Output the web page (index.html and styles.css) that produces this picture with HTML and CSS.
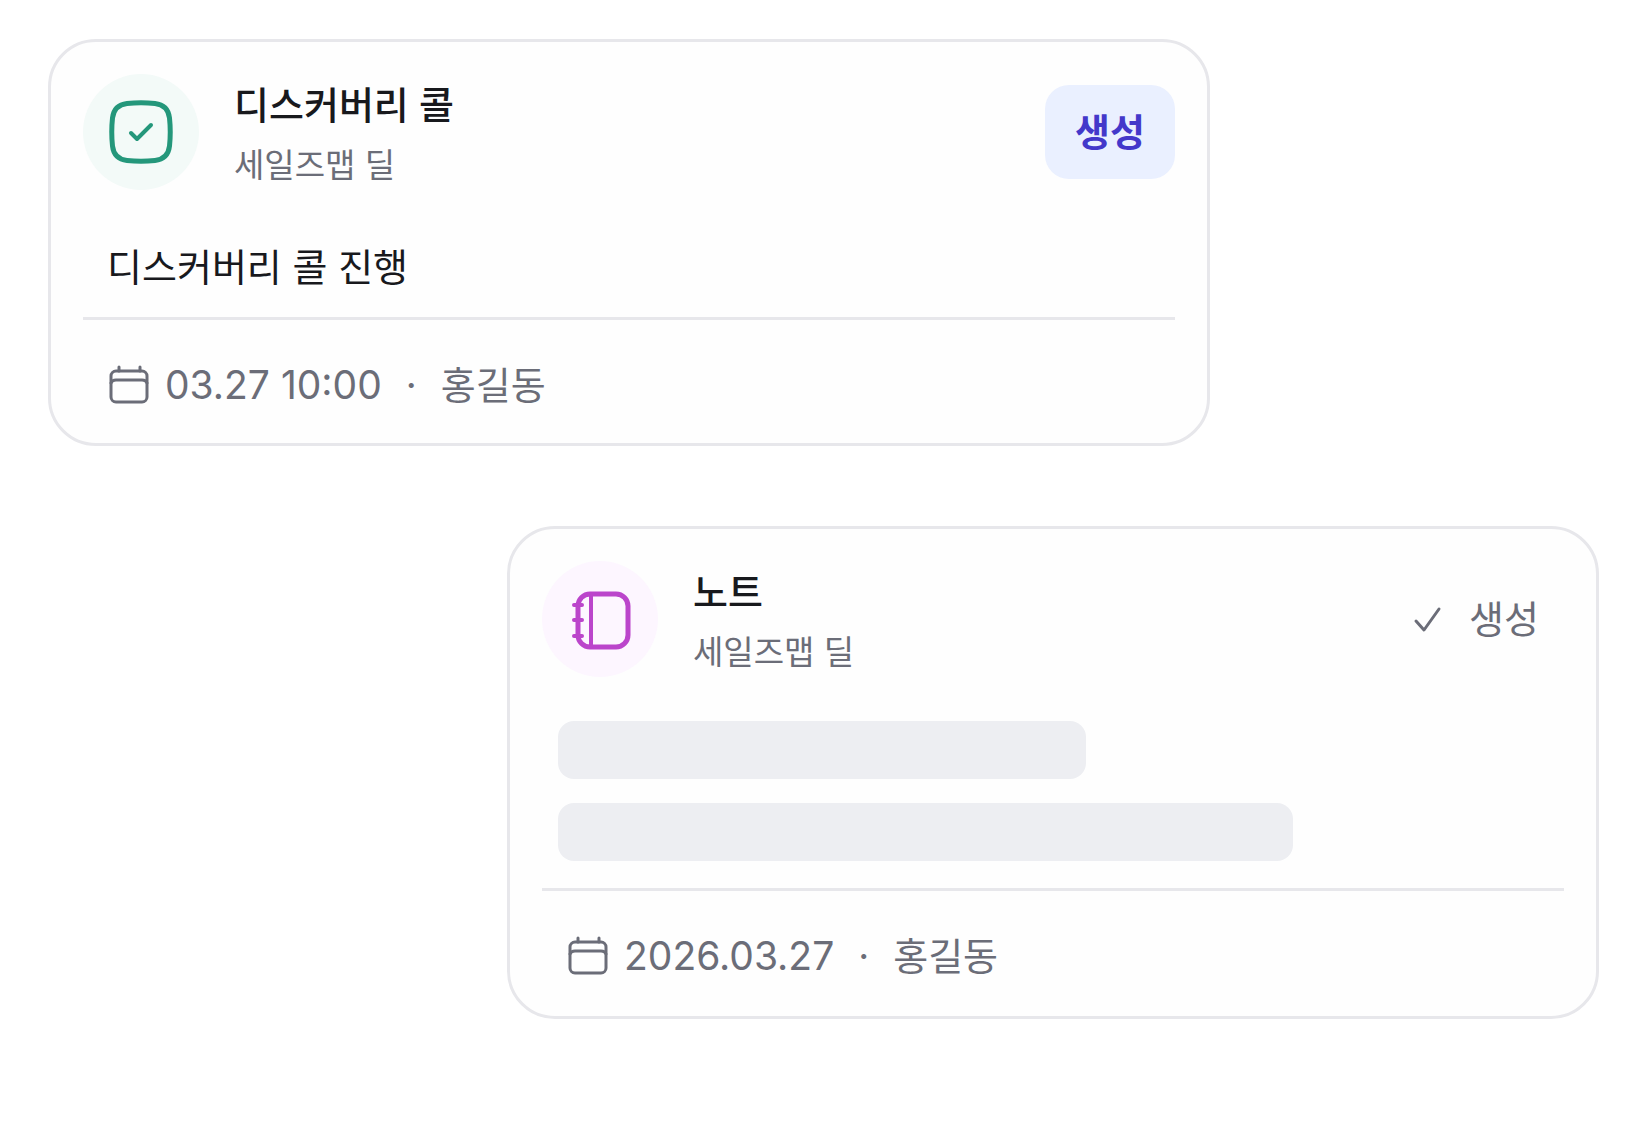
FILE: index.html
```html
<!DOCTYPE html>
<html lang="ko">

<head>
  <meta charset="utf-8">
  <meta name="viewport" content="width=device-width, initial-scale=1">
  <title>세일즈맵</title>
  <link rel="stylesheet" href="styles.css">
</head>

<body>
  <main class="content">

    <article class="card card-task">
      <header class="card-header">
        <div class="avatar green">
          <svg class="avatar-icon" viewBox="0 0 64 64">
            <path d="M18 3.500Q32 2 46 3.500Q59 5 60.500 18Q62 32 60.500 46Q59 59 46 60.500Q32 62 18 60.500Q5 59 3.500 46Q2 32 3.500 18Q5 5 18 3.500z" />
            <path class="tick" d="M22 33l6 6 14-14" />
          </svg>
        </div>
        <div class="heading">
          <h2>디스커버리 콜</h2>
          <p>세일즈맵 딜</p>
        </div>
        <button class="btn primary" type="button">생성</button>
      </header>
      <p class="text">디스커버리 콜 진행</p>
      <footer class="card-footer">
        <svg class="icon" viewBox="0 0 40 40">
          <rect x="2" y="6" width="36" height="31" rx="5" />
          <path d="M2 18q1-3 5-3h26q4 0 5 3M10 2v4M31 2v4" />
        </svg>
        <time datetime="03-27T10:00">03.27 10:00</time>
        <span class="dot">·</span>
        <span>홍길동</span>
      </footer>
    </article>

    <article class="card card-note">
      <header class="card-header">
        <div class="avatar purple">
          <svg class="avatar-icon" viewBox="0 0 64 64">
            <rect x="10" y="7" width="50" height="53" rx="12" />
            <path class="tick" d="M23 7v53M6 18h8M6 33h8M6 49h8" />
          </svg>
        </div>
        <div class="heading">
          <h2>노트</h2>
          <p>세일즈맵 딜</p>
        </div>
        <button class="btn done" type="button" disabled>
          <svg class="icon" viewBox="0 0 40 40">
            <path d="M11 22l8 9L34 10" />
          </svg>
          생성
        </button>
      </header>
      <div class="skeleton">
        <div class="bar short"></div>
        <div class="bar long"></div>
      </div>
      <footer class="card-footer">
        <svg class="icon" viewBox="0 0 40 40">
          <rect x="2" y="6" width="36" height="31" rx="5" />
          <path d="M2 18q1-3 5-3h26q4 0 5 3M10 2v4M31 2v4" />
        </svg>
        <time datetime="2026-03-27">2026.03.27</time>
        <span class="dot">·</span>
        <span>홍길동</span>
      </footer>
    </article>

  </main>
</body>

</html>
```

FILE: styles.css
```css
* {
  box-sizing: border-box;
}

body {
  margin: 0;
  background-color: #fff;
  color: #18191d;
  font-family: Inter, "Noto Sans CJK KR", sans-serif;
  font-size: 38px;
  line-height: 56px;
}

h2,
p {
  margin: 0;
}

.content {
  display: flex;
  flex-direction: column;
  gap: 80px;
  padding: 39px 48px 48px;
}

/* ---------- card ---------- */
.card {
  padding: 32px;
  border: 3px solid #e7e7eb;
  border-radius: 48px;
  background-color: #fefefe;
}

.card-task {
  margin-right: 389px;
}

.card-note {
  margin-left: 459px;
  padding-bottom: 34px;
}

.card-header {
  display: flex;
  align-items: center;
  height: 116px;
}

.heading {
  display: flex;
  flex: 1;
  flex-direction: column;
  gap: 4px;
  margin-left: 35px;
  padding-top: 6px;
}

.heading h2 {
  font-size: 38px;
  font-weight: 500;
}

.heading p {
  color: #6b6d78;
  font-size: 33px;
}

.text {
  padding: 49px 24px 22px;
}

.card-footer {
  display: flex;
  align-items: center;
  padding: 39px 26px 0;
  border-top: 3px solid #e7e7eb;
  color: #6b6d78;
  line-height: 52px;
}

.card-footer time {
  margin-left: 16px;
  font-size: 39px;
}

.dot {
  width: 59px;
  text-align: center;
}

/* ---------- icons ---------- */
.avatar {
  display: flex;
  align-items: center;
  justify-content: center;
  width: 116px;
  height: 116px;
  border-radius: 50%;
}

.avatar.green {
  background-color: #f3faf8;
  color: #24977b;
}

.avatar.purple {
  background-color: #fdf6ff;
  color: #bb45cb;
}

.avatar-icon,
.icon {
  fill: none;
  stroke: currentColor;
  stroke-linecap: round;
  stroke-linejoin: round;
}

.avatar-icon {
  width: 64px;
  height: 64px;
  stroke-width: 5px;
}

.avatar-icon .tick {
  stroke-width: 4px;
}

.icon {
  width: 40px;
  height: 40px;
  stroke-width: 3px;
}

/* ---------- button ---------- */
.btn {
  display: flex;
  align-items: center;
  gap: 24px;
  height: 94px;
  border: 0;
  border-radius: 24px;
  background: none;
  font: inherit;
}

.btn.primary {
  padding: 0 30px;
  background-color: #eaf0ff;
  color: #4338ca;
  font-weight: 700;
}

.btn.done {
  padding: 0 25px;
  color: #6b6d78;
}

/* ---------- skeleton ---------- */
.skeleton {
  display: flex;
  flex-direction: column;
  gap: 24px;
  padding: 44px 16px 27px;
}

.bar {
  max-width: 100%;
  height: 58px;
  border-radius: 16px;
  background-color: #edeef2;
}

.bar.short {
  width: 528px;
}

.bar.long {
  width: 735px;
}
```
